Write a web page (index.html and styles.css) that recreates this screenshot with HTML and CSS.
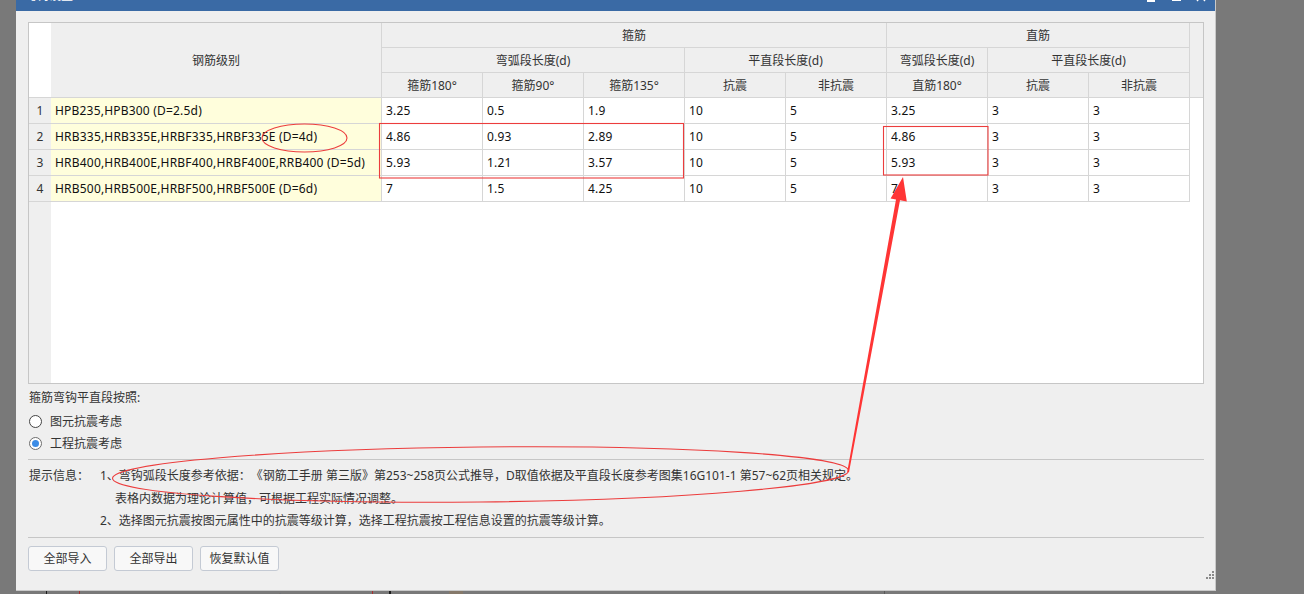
FILE: index.html
```html
<!DOCTYPE html>
<html lang="zh-CN">
<head>
<meta charset="utf-8">
<title>弯钩设置</title>
<link rel="stylesheet" href="styles.css">
</head>
<body>
<div class="dialog">
  <div class="titlebar">
    <span class="title">弯钩设置</span>
    <div class="win-ctrls">
      <svg class="wc" width="10" height="22" viewBox="0 0 10 22"><rect x="1" y="19" width="8" height="2" fill="#fff"/></svg>
      <svg class="wc" width="10" height="22" viewBox="0 0 10 22"><rect x="1.5" y="11.5" width="8" height="8" fill="none" stroke="#fff"/></svg>
      <svg class="wc" width="10" height="22" viewBox="0 0 10 22"><path d="M1 11l8 9M9 11l-8 9" stroke="#fff" stroke-width="1.4"/></svg>
    </div>
  </div>
  <div class="content">
    <div class="grid-wrap">
      <table class="grid">
        <colgroup>
          <col class="c-rn"><col class="c-grade">
          <col class="c-val"><col class="c-val"><col class="c-val"><col class="c-val"><col class="c-val"><col class="c-val"><col class="c-val"><col class="c-val">
          <col class="c-fill">
        </colgroup>
        <thead>
          <tr class="hr">
            <th class="rn-head" rowspan="3"></th>
            <th rowspan="3">钢筋级别</th>
            <th colspan="5">箍筋</th>
            <th colspan="3">直筋</th>
            <th class="fill-head" rowspan="3"></th>
          </tr>
          <tr class="hr">
            <th colspan="3">弯弧段长度(d)</th>
            <th colspan="2">平直段长度(d)</th>
            <th>弯弧段长度(d)</th>
            <th colspan="2">平直段长度(d)</th>
          </tr>
          <tr class="hr">
            <th>箍筋180°</th><th>箍筋90°</th><th>箍筋135°</th><th>抗震</th><th>非抗震</th>
            <th>直筋180°</th><th>抗震</th><th>非抗震</th>
          </tr>
        </thead>
        <tbody>
          <tr class="dr">
            <td class="rn">1</td><td class="grade">HPB235,HPB300 (D=2.5d)</td>
            <td>3.25</td><td>0.5</td><td>1.9</td><td>10</td><td>5</td><td>3.25</td><td>3</td><td>3</td><td class="fill"></td>
          </tr>
          <tr class="dr">
            <td class="rn">2</td><td class="grade">HRB335,HRB335E,HRBF335,HRBF335E (D=4d)</td>
            <td>4.86</td><td>0.93</td><td>2.89</td><td>10</td><td>5</td><td>4.86</td><td>3</td><td>3</td><td class="fill"></td>
          </tr>
          <tr class="dr">
            <td class="rn">3</td><td class="grade">HRB400,HRB400E,HRBF400,HRBF400E,RRB400 (D=5d)</td>
            <td>5.93</td><td>1.21</td><td>3.57</td><td>10</td><td>5</td><td>5.93</td><td>3</td><td>3</td><td class="fill"></td>
          </tr>
          <tr class="dr">
            <td class="rn">4</td><td class="grade">HRB500,HRB500E,HRBF500,HRBF500E (D=6d)</td>
            <td>7</td><td>1.5</td><td>4.25</td><td>10</td><td>5</td><td>7</td><td>3</td><td>3</td><td class="fill"></td>
          </tr>
          <tr class="empty-row">
            <td class="rn-empty"></td><td class="blank" colspan="10"></td>
          </tr>
        </tbody>
      </table>
    </div>

    <div class="opt-label">箍筋弯钩平直段按照:</div>
    <div class="radios">
      <label class="radio"><span class="dot"></span>图元抗震考虑</label>
      <label class="radio"><span class="dot on"></span>工程抗震考虑</label>
    </div>

    <div class="tips">
      <div class="tips-label">提示信息：</div>
      <div class="tips-body">
        <div class="tip">1、弯钩弧段长度参考依据：《钢筋工手册 第三版》第253~258页公式推导，D取值依据及平直段长度参考图集16G101-1 第57~62页相关规定。</div>
        <div class="tip indent">表格内数据为理论计算值，可根据工程实际情况调整。</div>
        <div class="tip">2、选择图元抗震按图元属性中的抗震等级计算，选择工程抗震按工程信息设置的抗震等级计算。</div>
      </div>
    </div>

    <div class="buttons">
      <button class="btn">全部导入</button>
      <button class="btn">全部导出</button>
      <button class="btn">恢复默认值</button>
      <svg class="grip" width="8" height="8" viewBox="0 0 8 8">
        <rect x="6" y="0" width="2" height="2" fill="#8a8a8a"/>
        <rect x="3" y="3" width="2" height="2" fill="#8a8a8a"/><rect x="6" y="3" width="2" height="2" fill="#8a8a8a"/>
        <rect x="0" y="6" width="2" height="2" fill="#8a8a8a"/><rect x="3" y="6" width="2" height="2" fill="#8a8a8a"/><rect x="6" y="6" width="2" height="2" fill="#8a8a8a"/>
      </svg>
    </div>
  </div>
</div>

<div class="backdrop">
  <span class="bl bl-1"></span>
  <span class="bl bl-red bl-2"></span>
  <span class="bd-text">2. 335MPa级，400MPa级带肋钢筋，不应小于钢筋直径的4倍。</span>
  <span class="bl bl-red bl-3"></span>
  <span class="bl bl-thick bl-4"></span>
  <span class="bd-char">运</span>
  <span class="bd-dots">…</span>
  <span class="bd-block"></span>
  <span class="bl bl-5"></span>
</div>

<svg class="annot" width="1304" height="594" viewBox="0 0 1304 594">
  <ellipse cx="304.5" cy="138" rx="42.5" ry="14" fill="none" stroke="#ec3d3d" stroke-width="1.1"/>
  <rect x="379.5" y="123.5" width="304" height="54.5" fill="none" stroke="#ec3d3d" stroke-width="1.1"/>
  <rect x="883.5" y="126.5" width="104.5" height="48.5" fill="none" stroke="#ec3d3d" stroke-width="1.1"/>
  <ellipse cx="480.5" cy="474.5" rx="368" ry="27.5" transform="rotate(-0.6 480.5 474.5)" fill="none" stroke="#ec3d3d" stroke-width="1.1"/>
  <polygon points="847.2,472 896,199.5 890.6,198.5 903,177 906.8,201.6 900,200.3 849,472.3" fill="#ff3535"/>
</svg>
</body>
</html>
```

FILE: styles.css
```css
* {
  box-sizing: border-box;
}

html,
body {
  margin: 0;
  padding: 0;
  width: 1304px;
  height: 594px;
  overflow: hidden;
  background: #797979;
}

body {
  position: relative;
  font-family: "Noto Sans", "Noto Sans CJK SC", sans-serif;
  font-size: 12px;
  color: #333;
  text-spacing-trim: space-all;
}

/* ---------- dialog ---------- */
.dialog {
  width: 1200px;
  margin-left: 16px;
  margin-top: -19px;
  background: #efefef;
  border-right: 1px solid #c9c9c9;
  border-bottom: 1px solid #c9c9c9;
}

.titlebar {
  height: 30px;
  background: #3a6aa5;
  display: flex;
  align-items: flex-start;
}

.title {
  color: #fff;
  line-height: 30px;
  font-size: 12px;
  padding-left: 9px;
}

.win-ctrls {
  margin-left: auto;
  display: flex;
  gap: 15px;
  padding-right: 9px;
}

.wc {
  display: block;
}

.content {
  padding: 11px 12px 11px 12px;
}

/* ---------- grid ---------- */
.grid-wrap {
  border: 1px solid #c6c6c6;
  background: #fff;
  width: 1176px;
  height: 362px;
  overflow: hidden;
}

.grid {
  border-collapse: separate;
  border-spacing: 0;
  table-layout: fixed;
  width: 1174px;
  font-size: 12px;
}

.c-rn { width: 22px; }
.c-grade { width: 331px; }
.c-val { width: 101px; }
.c-fill { width: 13px; }

.grid th,
.grid td {
  padding: 0;
  border-right: 1px solid #d6d6d6;
  border-bottom: 1px solid #d6d6d6;
  white-space: nowrap;
  overflow: hidden;
}

.grid th {
  background: #efefef;
  font-weight: normal;
  color: #333;
  text-align: center;
}

.hr {
  height: 25px;
}

.grid .rn-head {
  background: #fff;
  border-right: none;
}

.grid .fill-head {
  border-right: none;
}

.dr {
  height: 26px;
}

.grid td {
  color: #111;
  padding-left: 4px;
  text-align: left;
  letter-spacing: 0.2px;
}

.grid td.rn {
  background: #efefef;
  color: #333;
  text-align: center;
  padding-left: 0;
  border-right: none;
  letter-spacing: 0;
}

.grid td.grade {
  background: #fffedc;
  padding-left: 4px;
}

.grid td.fill {
  border: none;
}

.empty-row {
  height: 181px;
}

.grid td.rn-empty {
  background: #efefef;
  border: none;
}

.grid td.blank {
  border: none;
}

/* ---------- options ---------- */
.opt-label {
  margin-top: 4px;
  line-height: 20px;
  padding-left: 1px;
}

.radios {
  margin-top: 2px;
  display: flex;
  flex-direction: column;
}

.radio {
  display: flex;
  align-items: center;
  height: 22px;
  padding-left: 1px;
}

.dot {
  width: 13px;
  height: 13px;
  border: 1px solid #444;
  border-radius: 50%;
  background: #fff;
  margin-right: 8px;
  display: flex;
  align-items: center;
  justify-content: center;
}

.dot.on {
  border-color: #6d6d6d;
}

.dot.on::after {
  content: "";
  width: 7px;
  height: 7px;
  border-radius: 50%;
  background: #3c8ce6;
}

/* ---------- tips ---------- */
.tips {
  margin-top: 5px;
  border-top: 1px solid #c6c6c6;
  border-bottom: 1px solid #c6c6c6;
  padding: 5px 0 4px;
  display: flex;
  line-height: 22.5px;
  width: 1176px;
}

.tips-label {
  width: 72px;
  flex: none;
  padding-left: 1px;
}

.tip {
  white-space: nowrap;
}

.tip.indent {
  padding-left: 15px;
}

/* ---------- buttons ---------- */
.buttons {
  margin-top: 8px;
  display: flex;
  gap: 7px;
  align-items: flex-start;
  width: 1187px;
}

.btn {
  width: 79px;
  height: 25px;
  border: 1px solid #c4cad4;
  border-radius: 3px;
  background: #f8f8f8;
  font-family: inherit;
  font-size: 12px;
  color: #333;
  padding: 0;
}

.grip {
  margin-left: auto;
  margin-top: 25px;
  margin-right: 1px;
}

/* ---------- backdrop document ---------- */
.backdrop {
  display: flex;
  height: 12px;
  overflow: hidden;
  align-items: stretch;
}

.bl {
  width: 1px;
  background: #1c1c1c;
  flex: none;
}

.bl-red {
  background: #a83030;
}

.bl-1 { margin-left: 46px; }
.bl-2 { margin-left: 32px; }

.bd-text {
  margin-left: 12px;
  width: 280px;
  flex: none;
  font-family: "Liberation Serif", "Noto Sans CJK SC", serif;
  font-size: 11px;
  line-height: 12px;
  padding-top: 3px;
  color: #1c1c1c;
  white-space: nowrap;
  letter-spacing: -0.1px;
}

.bl-3 { margin-left: 0; }

.bl-thick {
  width: 2px;
  margin-left: 16px;
}

.bd-char {
  margin-left: 7px;
  width: 14px;
  font-size: 13px;
  line-height: 12px;
  padding-top: 3px;
  color: #1c1c1c;
}

.bd-dots {
  margin-left: 3px;
  width: 14px;
  font-size: 10px;
  line-height: 8px;
  color: #2a2a2a;
}

.bd-block {
  margin-left: 20px;
  width: 14px;
  background: #85796a;
}

.bl-5 {
  margin-left: 421px;
  background: #5a5a5a;
}

/* ---------- annotations ---------- */
.annot {
  position: absolute;
  left: 0;
  top: 0;
  pointer-events: none;
}
```
